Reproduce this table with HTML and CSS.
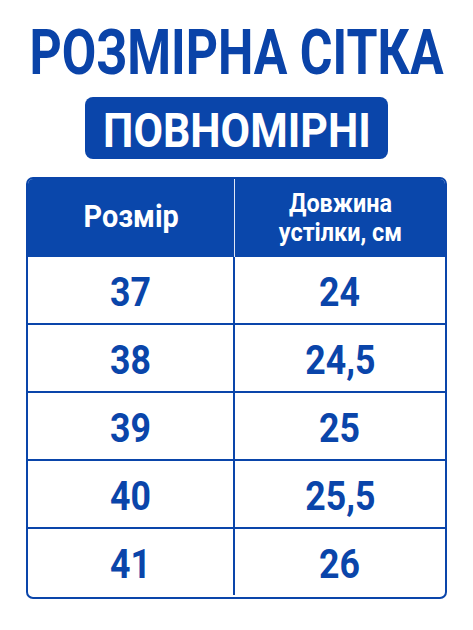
FILE: index.html
```html
<!DOCTYPE html>
<html lang="uk">
<head>
<meta charset="utf-8">
<link rel="stylesheet" href="styles.css">
</head>
<body>
<div class="page">
  <h1 class="title"><span class="squeeze title-text">РОЗМІРНА СІТКА</span></h1>
  <div class="badge"><span class="squeeze badge-text">ПОВНОМІРНІ</span></div>
  <div class="chart">
    <div class="cell head first"><span class="squeeze head-big">Розмір</span></div>
    <div class="cell head"><span class="squeeze head-small">Довжина<br>устілки, см</span></div>
    <div class="cell first"><span class="squeeze num">37</span></div>
    <div class="cell"><span class="squeeze num">24</span></div>
    <div class="cell first"><span class="squeeze num">38</span></div>
    <div class="cell"><span class="squeeze num">24,5</span></div>
    <div class="cell first"><span class="squeeze num">39</span></div>
    <div class="cell"><span class="squeeze num">25</span></div>
    <div class="cell first"><span class="squeeze num">40</span></div>
    <div class="cell"><span class="squeeze num">25,5</span></div>
    <div class="cell first last"><span class="squeeze num">41</span></div>
    <div class="cell last"><span class="squeeze num">26</span></div>
  </div>
</div>
</body>
</html>
```
FILE: styles.css
```css
html, body {
  margin: 0;
  padding: 0;
  background: #ffffff;
}
.page {
  width: 473px;
  height: 630px;
  display: flex;
  flex-direction: column;
  align-items: center;
  font-family: "Roboto", "Liberation Sans", sans-serif;
  font-weight: 700;
  color: #0a43a8;
}
.squeeze {
  display: inline-block;
  white-space: nowrap;
  flex-shrink: 0;
}
.title {
  margin: 21px 0 0;
  width: 473px;
  display: flex;
  justify-content: center;
  font-size: 63px;
  line-height: 63px;
  font-weight: 700;
}
.title-text {
  transform: scaleX(0.795);
  margin: 0 -54px;
}
.badge {
  margin-top: 13px;
  width: 303px;
  height: 62px;
  box-sizing: border-box;
  padding: 9px 0 4px;
  background: #0a45aa;
  border-radius: 8px;
  color: #ffffff;
  font-size: 49px;
  line-height: 49px;
  display: flex;
  justify-content: center;
}
.badge-text {
  transform: scaleX(0.875);
  margin: 0 -20px;
}
.chart {
  margin-top: 18px;
  width: 421px;
  box-sizing: border-box;
  border: 2px solid #0a45aa;
  border-radius: 7px;
  overflow: hidden;
  display: grid;
  grid-template-columns: 207px 1fr;
  grid-template-rows: 78px repeat(5, 68px);
}
.cell {
  display: flex;
  align-items: center;
  justify-content: center;
  border-bottom: 2px solid #0a45aa;
  box-sizing: border-box;
  padding-top: 5px;
}
.cell.first {
  border-right: 2px solid #0a45aa;
}
.cell.last {
  border-bottom: none;
  height: 66px;
}
.cell.head {
  background: #0a47ab;
  border-bottom: none;
  color: #ffffff;
  padding-top: 0;
  padding-bottom: 3px;
}
.cell.head.first {
  border-right: 1px solid #dfe6f5;
}
.head-big {
  font-size: 31px;
  line-height: 31px;
  transform: scaleX(0.93);
}
.head-small {
  font-size: 26px;
  line-height: 29px;
  text-align: center;
  transform: scaleX(0.9);
  padding-top: 3px;
}
.num {
  font-size: 41px;
  line-height: 41px;
  color: #0a45aa;
  transform: scaleX(0.87);
}
```
